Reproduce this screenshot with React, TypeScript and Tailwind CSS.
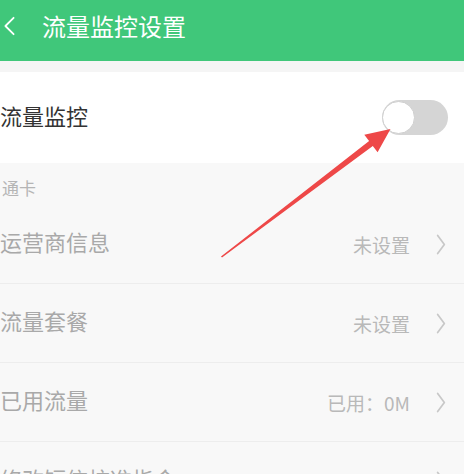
import React from 'react'

const font = { fontFamily: '"Noto Sans CJK SC", "Noto Sans", sans-serif' }

function Chevron({ className }: { className?: string }) {
  return (
    <svg viewBox="0 0 10 22" className={className} fill="none" stroke="currentColor" strokeWidth="1.8" strokeLinecap="round" strokeLinejoin="round">
      <path d="M1.5 1.5 L8.5 11 L1.5 20.5" />
    </svg>
  )
}

function Row({ label, value }: { label: string; value?: string }) {
  return (
    <div className="flex h-[79px] items-center justify-between border-b border-[#ededed] pr-[18px]">
      <span className="mb-[6px] text-[22px] leading-none text-[#a9a9a9]">{label}</span>
      <div className="flex items-center gap-[26px]">
        {value && <span className="text-[19px] leading-none text-[#b9b9b9]">{value}</span>}
        <Chevron className="h-[21px] w-[10px] text-[#c8c8c8]" />
      </div>
    </div>
  )
}

export default function App() {
  return (
    <div className="relative h-[474px] w-[464px] overflow-hidden bg-[#f8f8f8]" style={font}>
      <div className="flex h-[61px] items-center bg-[#40c77a] pb-[10px] text-white">
        <svg viewBox="0 0 14 22" className="ml-[3px] h-[20px] w-[13px]" fill="none" stroke="currentColor" strokeWidth="2" strokeLinecap="round" strokeLinejoin="round">
          <path d="M11.5 2 L2.5 11 L11.5 20" />
        </svg>
        <span className="ml-[26px] text-[24px] leading-none">流量监控设置</span>
      </div>
      <div className="h-[11px] bg-[#f5f5f5]" />
      <div className="flex h-[91px] items-center justify-between bg-white pr-[16px]">
        <span className="mb-[6px] text-[22px] leading-none text-[#333333]">流量监控</span>
        <div className="relative h-[35px] w-[66px] rounded-full bg-[#d5d5d5]">
          <div className="absolute left-0 top-[1px] h-[33px] w-[33px] rounded-full border border-[#cfcfcf] bg-white" />
        </div>
      </div>
      <div className="flex h-[42px] items-center pt-[6px] pl-[2px]">
        <span className="text-[17px] leading-none text-[#b5b5b5]">通卡</span>
      </div>
      <Row label="运营商信息" value="未设置" />
      <Row label="流量套餐" value="未设置" />
      <Row label="已用流量" value="已用：0M" />
      <Row label="修改短信校准指令" />
      <svg className="pointer-events-none absolute left-0 top-0" width="464" height="474" viewBox="0 0 464 474">
        <polygon
          points="222,257.5 372.8,145.9 377.6,152.2 390.5,129 364.3,134.8 369.1,141.1 221,256.5"
          fill="#ee4848"
        />
      </svg>
    </div>
  )
}
